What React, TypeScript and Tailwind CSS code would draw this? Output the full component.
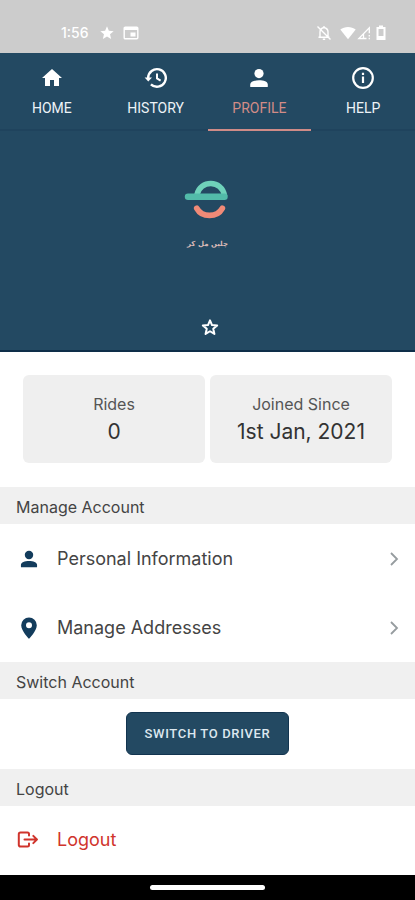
import type { ReactNode } from "react";
import { MdHome, MdStar } from "react-icons/md";

function PersonIcon({ className }: { className: string }) {
  return (
    <svg viewBox="0 0 24 24" fill="currentColor" className={className} aria-hidden="true">
      <circle cx="12" cy="7.6" r="4.6" />
      <path d="M3.200 20.500v-2.100c0-2.700 4.200-4.100 8.800-4.100s8.800 1.400 8.800 4.100v2.100q0 .6-.6.600H3.800q-.6 0-.6-.6z" />
    </svg>
  );
}

function HistoryIcon() {
  return (
    <svg viewBox="0 0 24 24" fill="none" stroke="currentColor" strokeWidth="2.400" className="size-6" aria-hidden="true">
      <path d="M4.200 12a8.800 8.800 0 1 1 2.700 6.300" />
      <path d="M.6 11.500h7.400L4.300 15.600z" fill="currentColor" stroke="none" />
      <path d="M13 7.500v4.900l3.600 2.200" strokeWidth="2" />
    </svg>
  );
}

function InfoIcon() {
  return (
    <svg viewBox="0 0 24 24" fill="none" stroke="currentColor" strokeWidth="2.200" className="size-6" aria-hidden="true">
      <circle cx="12" cy="12" r="9.800" />
      <path d="M12 10.500v6.500M12 6.800v2.200" />
    </svg>
  );
}

function StarOutlineIcon() {
  return (
    <svg viewBox="0 0 24 24" fill="none" stroke="currentColor" strokeWidth="2.400" strokeLinejoin="round" className="mt-auto ml-[5px] size-5 text-white" aria-hidden="true">
      <path d="M12 4l2.400 5.700 6.200.5-4.700 4 1.400 6.100L12 17.100l-5.300 3.200 1.400-6.100-4.700-4 6.200-.5z" />
    </svg>
  );
}

function PinIcon() {
  return (
    <svg viewBox="0 0 24 24" fill="currentColor" fillRule="evenodd" className="size-6" aria-hidden="true">
      <path d="M12 1.500a7.800 7.800 0 0 0-7.800 7.800C4.200 15 12 22.800 12 22.800S19.800 15 19.800 9.300A7.800 7.800 0 0 0 12 1.500zm0 4.700a3 3 0 1 1 0 6 3 3 0 0 1 0-6z" />
    </svg>
  );
}

function LogoutIcon() {
  return (
    <svg viewBox="0 0 24 24" fill="none" stroke="currentColor" strokeWidth="2" strokeLinecap="round" strokeLinejoin="round" className="size-6" aria-hidden="true">
      <path d="M13 7.500V6q0-1.500-1.500-1.500H4.500Q2.800 4.500 2.800 6.300v10.400q0 1.800 1.700 1.800h7q1.500 0 1.500-1.500v-1.500" />
      <path d="M8.500 11.500h12.500M17.300 7.900 20.900 11.500l-3.600 3.600" />
    </svg>
  );
}

function StatusBar() {
  return (
    <div className="flex h-[53px] items-center justify-between bg-[#cccccc] pt-3 pr-7 pl-[61px] text-white">
      <div className="flex items-center">
        <span className="text-sm font-medium">1:56</span>
        <MdStar className="ml-[10px] size-4" />
        <svg viewBox="0 0 16 14" className="ml-2 h-[14px] w-4" aria-hidden="true">
          <rect x="1.200" y="1.200" width="13.600" height="11.600" rx="1" fill="none" stroke="currentColor" strokeWidth="1.400" />
          <path d="M1 1h14v3H1z" fill="currentColor" />
          <rect x="7.500" y="6.500" width="5" height="4" fill="currentColor" />
        </svg>
      </div>
      <div className="flex items-center">
        <svg viewBox="0 0 16 16" className="mr-2 size-4" fill="none" stroke="currentColor" strokeWidth="1.400" aria-hidden="true">
          <path d="M4 12V7q0-3.500 4-4.500 4 1 4 4.500v5M2.500 12.200h11M8 1v2M6.800 14.300h2.400M1.500 1.500l13 13" />
        </svg>
        <svg viewBox="0 0 16 14" className="h-[14px] w-4" fill="currentColor" aria-hidden="true">
          <path d="M.3 3.600C4.600.1 11.400.1 15.700 3.600L8 13.300z" />
        </svg>
        <svg viewBox="0 0 14 14" className="mr-1 ml-px size-[14px]" fill="none" stroke="currentColor" strokeWidth="1.300" aria-hidden="true">
          <path d="M9.500 12.500H1.800L12.300 1.800v5.400M12.300 9v1.500M12.300 11.800v1.400M6.500 8v4.500" />
        </svg>
        <svg viewBox="0 0 12 16" className="h-4 w-3" fill="none" stroke="currentColor" strokeWidth="2" aria-hidden="true">
          <path d="M2.500 3h7v11h-7z" />
          <path d="M4 1.500h4M2 12h8" />
        </svg>
      </div>
    </div>
  );
}

function Tab({ icon, label, active = false }: { icon: ReactNode; label: string; active?: boolean }) {
  return (
    <button
      type="button"
      aria-current={active ? "page" : undefined}
      className={
        active
          ? "flex flex-1 flex-col items-center border-b-2 border-[#cf8b87] pt-[13px] text-[#d28c87]"
          : "flex flex-1 flex-col items-center border-b-2 border-[#1f435d] pt-[13px] text-[#edf3f7]"
      }
    >
      <span className="flex size-6 items-center justify-center text-white">{icon}</span>
      <span className="mt-2 text-sm leading-5">{label}</span>
    </button>
  );
}

function Logo() {
  return (
    <svg viewBox="0 0 48 40" className="h-10 w-12" fill="none" strokeLinecap="round" strokeLinejoin="round" role="img" aria-label="Logo">
      <path d="M13 14.500C16-.2 38-.5 40.500 15.500" stroke="#6fd2ba" strokeWidth="5.500" />
      <path d="M4 16.800H40.500" stroke="#52bba9" strokeWidth="6.400" />
      <path d="M12.800 28.300C18 37.800 33 37.800 38.300 28.300" stroke="#f08a77" strokeWidth="5.800" />
    </svg>
  );
}

function Stat({ label, value }: { label: string; value: string }) {
  return (
    <div className="flex h-[88px] flex-1 flex-col items-center rounded-md bg-[#efefef] pt-[19px]">
      <dt className="text-base leading-5 text-[#555]">{label}</dt>
      <dd className="mt-1 text-[21px] leading-7 text-[#333]">{value}</dd>
    </div>
  );
}

function SectionTitle({ children }: { children: ReactNode }) {
  return <h2 className="flex h-[37px] items-center bg-[#f0f0f0] px-4 pt-[3px] text-base text-[#444]">{children}</h2>;
}

function Row({ icon, label }: { icon: ReactNode; label: string }) {
  return (
    <button type="button" className="flex h-[69px] w-full items-center pr-4 pl-[17px] text-left text-lg text-[#444]">
      <span className="mr-4 flex size-6 items-center justify-center text-[#133c5c]">{icon}</span>
      <span className="flex-1">{label}</span>
      <svg viewBox="0 0 10 14" className="h-[14px] w-[10px] text-[#969c9f]" fill="none" stroke="currentColor" strokeWidth="1.800" aria-hidden="true">
        <path d="m2 1 6 6-6 6" />
      </svg>
    </button>
  );
}

export default function App() {
  return (
    <div className="flex min-h-screen flex-col bg-white font-['Inter','Roboto',sans-serif]">
      <StatusBar />
      <header className="bg-[#234962] font-['Roboto',sans-serif]">
        <nav className="flex h-[78px]">
          <Tab icon={<MdHome className="size-6" />} label="HOME" />
          <Tab icon={<HistoryIcon />} label="HISTORY" />
          <Tab icon={<PersonIcon className="size-6" />} label="PROFILE" active />
          <Tab icon={<InfoIcon />} label="HELP" />
        </nav>
        <div className="flex h-[221px] flex-col items-center border-b-2 border-[#0e2e49] pt-[49px] pb-[13px]">
          <Logo />
          <p lang="ur" dir="rtl" className="mt-[18px] font-['DejaVu_Sans',sans-serif] text-[7px] leading-3 font-bold text-[#d9b9b7]">
            چلیں مل کر
          </p>
          <StarOutlineIcon />
        </div>
      </header>
      <main>
        <dl className="flex gap-[5px] px-[23px] pt-[23px] pb-6">
          <Stat label="Rides" value="0" />
          <Stat label="Joined Since" value="1st Jan, 2021" />
        </dl>
        <SectionTitle>Manage Account</SectionTitle>
        <Row icon={<PersonIcon className="size-[22px]" />} label="Personal Information" />
        <Row icon={<PinIcon />} label="Manage Addresses" />
        <SectionTitle>Switch Account</SectionTitle>
        <div className="flex justify-center pt-[13px] pb-[14px]">
          <button type="button" className="h-[43px] rounded-md border border-[#12344f] bg-[#234962] px-[18px] font-['Roboto',sans-serif] text-[13px] font-medium tracking-wider text-[#dce7ef]">
            SWITCH TO DRIVER
          </button>
        </div>
        <SectionTitle>Logout</SectionTitle>
        <button type="button" className="flex h-[67px] w-full items-center px-4 text-left text-lg text-[#d0342c]">
          <LogoutIcon />
          <span className="ml-[17px]">Logout</span>
        </button>
      </main>
      <footer className="mt-auto flex h-[25px] items-center justify-center bg-black">
        <div className="h-[5px] w-[115px] rounded-full bg-white" />
      </footer>
    </div>
  );
}
